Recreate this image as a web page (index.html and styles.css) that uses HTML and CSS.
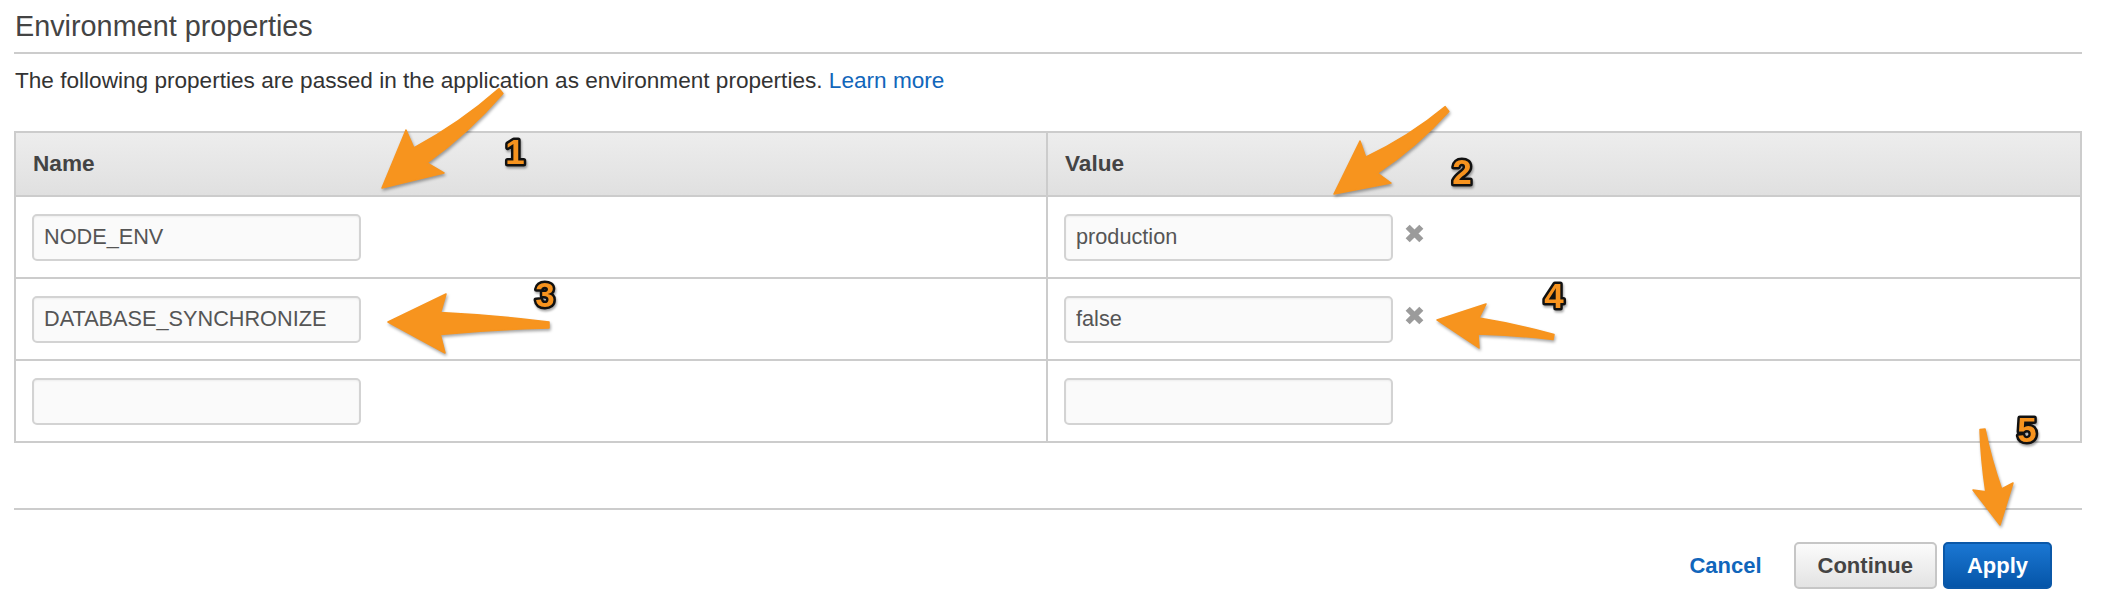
FILE: index.html
```html
<!DOCTYPE html>
<html lang="en">
<head>
<meta charset="utf-8">
<title>Environment properties</title>
<link rel="stylesheet" href="styles.css">
</head>
<body>
<div class="page">
  <h2 class="title">Environment properties</h2>
  <p class="desc">The following properties are passed in the application as environment properties. <a href="#" class="link">Learn more</a></p>

  <div class="props" role="table">
    <div class="cell head" role="columnheader">Name</div>
    <div class="cell head" role="columnheader">Value</div>

    <div class="cell" role="cell"><input class="field" type="text" value="NODE_ENV"></div>
    <div class="cell" role="cell"><input class="field" type="text" value="production">
      <svg class="remove" viewBox="0 0 20 20" aria-label="Remove"><path d="M3.5 3.5 L16.5 16.5 M16.5 3.5 L3.5 16.5"/></svg></div>

    <div class="cell" role="cell"><input class="field" type="text" value="DATABASE_SYNCHRONIZE"></div>
    <div class="cell" role="cell"><input class="field" type="text" value="false">
      <svg class="remove" viewBox="0 0 20 20" aria-label="Remove"><path d="M3.5 3.5 L16.5 16.5 M16.5 3.5 L3.5 16.5"/></svg></div>

    <div class="cell" role="cell"><input class="field" type="text" value=""></div>
    <div class="cell" role="cell"><input class="field" type="text" value=""></div>
  </div>

  <div class="footer">
    <a href="#" class="cancel">Cancel</a>
    <button class="btn btn-secondary" type="button">Continue</button>
    <button class="btn btn-primary" type="button">Apply</button>
  </div>

  <svg class="marks" width="2104" height="610" viewBox="0 0 2104 610">
    <g class="arrows">
      <path d="M 499.1 88.6 Q 460.2 123 413.8 147.9 L 406 130 L 382 188 L 444 173 L 427 162.9 Q 468.7 132.9 502.9 93.4 Z"/>
      <path d="M 1445.2 106.6 Q 1409 136.7 1365.6 157.1 L 1360 141 L 1334 194 L 1391 183 L 1377.4 173.1 Q 1416.7 147.1 1448.8 111.4 Z"/>
      <path d="M 549 322 Q 494.9 315 440.7 312.4 L 446 294 L 388 322 L 445 353 L 440.3 334.4 Q 494.7 329.5 549 328 Z"/>
      <path d="M 1554 334.5 Q 1516.5 324 1479 318 L 1486 304 L 1437 320 L 1479 348 L 1478 334 Q 1516 335 1553 339.5 Z"/>
      <path d="M 1980 429.5 Q 1981 460 1985.8 491.8 L 1973 490 L 2000 525 L 2013 483 L 2001.6 489 Q 1991 459 1985 429 Z"/>
    </g>
    <g class="nums">
      <text x="515" y="164">1</text>
      <text x="1462" y="184">2</text>
      <text x="545" y="307">3</text>
      <text x="1554" y="308">4</text>
      <text x="2027" y="442">5</text>
    </g>
  </svg>
</div>
</body>
</html>
```

FILE: styles.css
```css
* {
  box-sizing: border-box;
}

body {
  margin: 0;
  background: #ffffff;
  font-family: "Liberation Sans", Arial, Helvetica, sans-serif;
}

.page {
  position: relative;
  width: 2104px;
  height: 610px;
  padding: 0 22px 0 14px;
  overflow: hidden;
}

.title {
  margin: 0;
  padding: 9px 0 9px 1px;
  font-size: 28.8px;
  line-height: 34px;
  font-weight: normal;
  color: #444444;
  border-bottom: 2px solid #cccccc;
}

.desc {
  margin: 13px 0 0;
  padding-left: 1px;
  font-size: 22.6px;
  line-height: 27px;
  color: #333333;
}

.link {
  color: #1166bb;
  text-decoration: none;
}

.props {
  margin-top: 37px;
  display: grid;
  grid-template-columns: 1032px 1fr;
  border-top: 2px solid #cccccc;
  border-left: 2px solid #cccccc;
}

.cell {
  display: flex;
  align-items: center;
  height: 82px;
  padding-left: 16px;
  border-right: 2px solid #cccccc;
  border-bottom: 2px solid #cccccc;
}

.head {
  height: 64px;
  padding-left: 17px;
  background: linear-gradient(#ededed, #e0e0e0);
  font-size: 22.6px;
  font-weight: bold;
  color: #444444;
}

.field {
  width: 329px;
  height: 47px;
  margin: 0;
  padding: 0 10px;
  border: 2px solid #d3d3d3;
  border-radius: 5px;
  background: #fafafa;
  box-shadow: inset 0 1px 2px rgba(0, 0, 0, 0.05);
  font-family: "Liberation Sans", Arial, Helvetica, sans-serif;
  font-size: 21.7px;
  color: #555555;
  outline: none;
}

.remove {
  width: 21px;
  height: 21px;
  margin-left: 11px;
  margin-top: -8px;
  fill: none;
  stroke: #9b9b9b;
  stroke-width: 5.5;
}

.footer {
  margin-top: 65px;
  padding: 32px 30px 0 0;
  border-top: 2px solid #cccccc;
  display: flex;
  justify-content: flex-end;
  align-items: center;
}

.cancel {
  margin-right: 32px;
  font-size: 22px;
  font-weight: bold;
  color: #1166bb;
  text-decoration: none;
}

.btn {
  height: 47px;
  padding: 0 22px;
  border-radius: 5px;
  font-family: "Liberation Sans", Arial, Helvetica, sans-serif;
  font-size: 22px;
  font-weight: bold;
  cursor: pointer;
}

.btn-secondary {
  margin-right: 6px;
  border: 2px solid #c6c6c6;
  background: linear-gradient(#fbfbfb, #e3e3e3);
  color: #444444;
}

.btn-primary {
  border: 2px solid #0b58a8;
  background: linear-gradient(#1b77d3, #0555a8);
  color: #ffffff;
}

.marks {
  position: absolute;
  top: 0;
  left: 0;
  pointer-events: none;
}

.arrows path {
  fill: #f7941e;
  stroke: #f7941e;
  stroke-width: 1.5;
  stroke-linejoin: round;
  filter: drop-shadow(1px 2px 1.5px rgba(0, 0, 0, 0.35));
}

.nums text {
  font-family: "Liberation Sans", Arial, sans-serif;
  font-size: 35px;
  font-weight: bold;
  text-anchor: middle;
  fill: #f7931e;
  stroke: #111111;
  stroke-width: 5;
  stroke-linejoin: round;
  paint-order: stroke;
  filter: drop-shadow(1px 2px 1px rgba(0, 0, 0, 0.35));
}
```
